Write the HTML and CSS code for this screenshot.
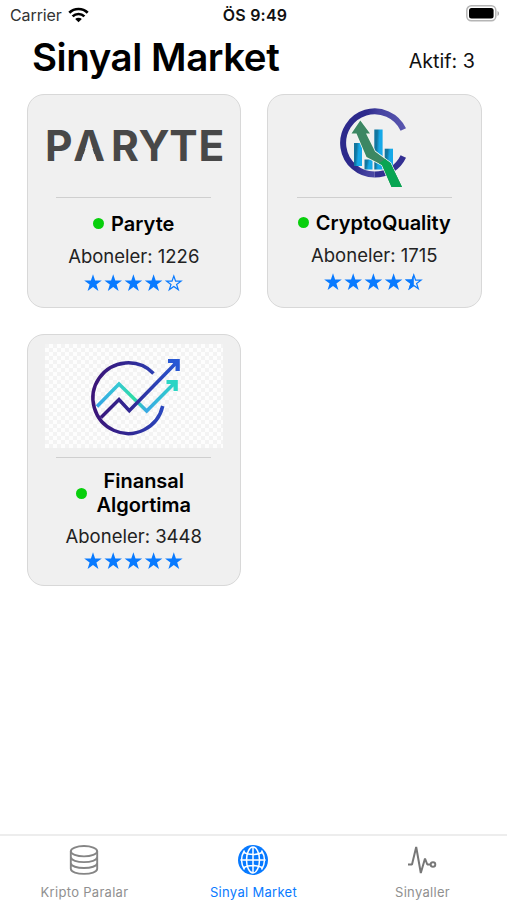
FILE: index.html
```html
<!DOCTYPE html>
<html lang="tr">
<head>
<meta charset="utf-8">
<title>Sinyal Market</title>
<link rel="stylesheet" href="styles.css">
</head>
<body>
<svg class="defs" aria-hidden="true">
  <defs>
    <path id="star" d="M9 .2 11.1 6.6 17.8 6.6 12.4 10.6 14.4 17 9 13.1 3.6 17 5.6 10.6 .2 6.6 6.9 6.6Z"/>
    <path id="star-line" d="M9 2 10.8 7.200 16.200 7.200 11.800 10.400 13.500 15.600 9 12.400 4.500 15.600 6.200 10.400 1.800 7.200 7.200 7.200Z"/>
  </defs>
</svg>
<div class="screen">
  <div class="status">
    <div class="carrier"><span>Carrier</span>
      <svg width="21" height="16" viewBox="0 0 21 16"><g fill="none" stroke="#000" stroke-width="2.7"><path d="M1.3 5.8a13 13 0 0 1 18.4 0"/><path d="M4.6 9.4a8.4 8.4 0 0 1 11.8 0"/></g><path d="M10.5 15.3 7.2 12a4.7 4.7 0 0 1 6.6 0Z"/></svg>
    </div>
    <div class="time">ÖS 9:49</div>
    <svg class="battery" width="34" height="17" viewBox="0 0 34 17"><rect x=".8" y=".8" width="29" height="15" rx="4.5" fill="#fff" stroke="#b5b5b5" stroke-width="1.5"/><rect x="3" y="3" width="24.6" height="10.6" rx="2.5"/><path d="M31.5 6v5c2-.8 2-4.200 0-5Z" fill="#aaa"/></svg>
  </div>
  <header class="header">
    <h1>Sinyal Market</h1>
    <span class="active-count">Aktif: 3</span>
  </header>
  <main class="grid">
    <article class="card">
      <div class="logo">
        <svg width="200" height="80" viewBox="34 107 200 80">
          <text class="wordmark" y="161" x="58.800 89 125 154 183.500 211.500">PARYTE</text>
          <path d="M89 138.500 97 162H81Z" fill="#f0f0f0"/>
        </svg>
      </div>
      <hr>
      <div class="name"><i class="dot"></i><h2>Paryte</h2></div>
      <p>Aboneler: 1226</p>
      <svg class="stars" width="100" height="18" viewBox="0 0 100 18"><use href="#star"/><use href="#star" x="20.2"/><use href="#star" x="40.4"/><use href="#star" x="60.600"/><use class="line" href="#star-line" x="80.800"/></svg>
    </article>
    <article class="card quality">
      <div class="logo">
        <svg width="180" height="80" viewBox="284 107 180 80">
          <defs>
            <linearGradient id="ring" x1="0" x2="1" y1=".4" y2=".6"><stop offset=".3" stop-color="#2d2a8c"/><stop offset=".5" stop-color="#4542a0"/><stop offset="1" stop-color="#5b58b0"/></linearGradient>
            <linearGradient id="bar" x2="1" y2=".25"><stop offset=".35" stop-color="#12769f"/><stop offset=".65" stop-color="#16a9e8"/></linearGradient>
          </defs>
          <path d="M403.300 129.500A31.600 31.600 0 1 0 374.500 174.600" fill="none" stroke="url(#ring)" stroke-width="6"/>
          <path d="M403.300 156.500A31.600 31.600 0 0 1 374.500 174.600" fill="none" stroke="#332f92" stroke-width="6"/>
          <g fill="url(#bar)"><rect x="354" y="143" width="8" height="23"/><rect x="364.500" y="159.500" width="8" height="10"/><rect x="374.300" y="129.500" width="8.300" height="40"/><rect x="384.700" y="148.700" width="8.300" height="18"/></g>
          <path d="M360.300 120.500 351.500 133.500H356.500L366.500 157 382 165 391.500 187H402L390.500 163 375 151.500 366 133.500H370Z" fill="#3c8763" stroke="#f3f8f3" stroke-width="1.600" paint-order="stroke"/>
          <path d="M382 165 391.500 187H402L390.500 163 385 159 379 163.500Z" fill="#08a552"/>
        </svg>
      </div>
      <hr>
      <div class="name"><i class="dot"></i><h2>CryptoQuality</h2></div>
      <p>Aboneler: 1715</p>
      <svg class="stars" width="100" height="18" viewBox="0 0 100 18"><use href="#star"/><use href="#star" x="20.2"/><use href="#star" x="40.4"/><use href="#star" x="60.600"/><use class="line" href="#star-line" x="80.800"/><path d="M89.800.2V13.100L84.400 17 86.400 10.600 81 6.600H87.700Z"/></svg>
    </article>
    <article class="card tall">
      <div class="logo">
        <svg width="178" height="104" viewBox="45 344 178 104">
          <defs>
            <pattern id="check" width="8" height="8" patternUnits="userSpaceOnUse" x="45" y="344"><rect width="8" height="8" fill="#fdfdfd"/><path d="M0 0h4v4H0zM4 4h4v4H4z" fill="#f3f3f3"/></pattern>
            <linearGradient id="deep" gradientUnits="userSpaceOnUse" x1="93" x2="179" y1="0" y2="0"><stop stop-color="#3b1478"/><stop offset=".45" stop-color="#302995"/><stop offset="1" stop-color="#2858d4"/></linearGradient>
            <linearGradient id="aqua" gradientUnits="userSpaceOnUse" x1="97" x2="178" y1="0" y2="0"><stop stop-color="#35a4e6"/><stop offset=".25" stop-color="#37c7d5"/><stop offset=".45" stop-color="#2edca4"/><stop offset=".61" stop-color="#39a9e5"/><stop offset="1" stop-color="#2bd5c4"/></linearGradient>
          </defs>
          <rect x="45" y="344" width="178" height="104" fill="url(#check)"/>
          <g fill="none" stroke-width="3.500">
            <g stroke="url(#aqua)"><path d="M97 406.500 119 384 146.700 411 174.500 383"/></g>
            <path d="M166.500 380H177.800V391H173.500V386.500L171 384H166.500Z" fill="#2bd5c4"/>
            <g stroke="url(#deep)"><path d="M153.500 373.500A35.300 35.300 0 1 0 162.700 406"/><path d="M101 417.500 119 399.500 129.300 410.700 176.500 362.500"/></g>
            <path d="M168 359H179.800V371H175.500V366L172.500 363H168Z" fill="#2858d4"/>
          </g>
        </svg>
      </div>
      <hr>
      <div class="name"><i class="dot"></i><h2>Finansal<br>Algortima</h2></div>
      <p>Aboneler: 3448</p>
      <svg class="stars" width="100" height="18" viewBox="0 0 100 18"><use href="#star"/><use href="#star" x="20.2"/><use href="#star" x="40.4"/><use href="#star" x="60.600"/><use href="#star" x="80.800"/></svg>
    </article>
  </main>
  <nav class="tabs">
    <div class="tab">
      <svg width="34" height="34" viewBox="0 0 34 34" fill="none" stroke="#858585" stroke-width="1.900"><ellipse cx="17" cy="8.200" rx="13.200" ry="5.200"/><path d="M3.800 8.200V25.800C3.800 32.500 30.200 32.500 30.200 25.800V8.200M3.800 14.100C3.800 20.800 30.200 20.800 30.200 14.100M3.800 20C3.800 26.700 30.200 26.700 30.200 20"/></svg>
      <span>Kripto Paralar</span>
    </div>
    <div class="tab selected">
      <svg width="34" height="34" viewBox="0 0 34 34"><circle cx="17" cy="17" r="15" fill="#087aff"/><g fill="none" stroke="#fff" stroke-width="1.500"><path d="M17 4V30M4.500 17H29.500M7 9.200Q17 14 27 9.200M7 24.800Q17 20 27 24.800"/><ellipse cx="17" cy="17" rx="6.500" ry="13"/><path d="M8.500 7.500Q2.500 17 8.500 26.500M25.500 7.500Q31.500 17 25.500 26.500"/></g></svg>
      <span>Sinyal Market</span>
    </div>
    <div class="tab">
      <svg width="34" height="34" viewBox="0 0 34 34" fill="none" stroke="#777" stroke-width="2"><path d="M3 21.500H7L11.200 4 15.800 30 20 15.500 22.300 21.500H25.500" stroke-linejoin="bevel"/><circle cx="28" cy="21.500" r="2.300" stroke-width="1.900"/></svg>
      <span>Sinyaller</span>
    </div>
  </nav>
</div>
</body>
</html>
```
FILE: styles.css
```css
* { box-sizing: border-box; }
body {
  margin: 0;
  background: #fff;
  color: #000;
  font-family: Inter, "Liberation Sans", sans-serif;
}
svg { display: block; }
.defs { position: absolute; width: 0; height: 0; }
.screen {
  width: 507px;
  height: 900px;
  display: flex;
  flex-direction: column;
  overflow: hidden;
}
.status {
  height: 29px;
  padding: 0 7px 0 10px;
  display: grid;
  grid-template-columns: 1fr auto 1fr;
  align-items: center;
  font-size: 16px;
}
.carrier { display: flex; align-items: center; gap: 6px; color: #333; }
.carrier span { letter-spacing: -0.1px; }
.time { font-weight: 600; color: #111; letter-spacing: 0.2px; }
.battery { justify-self: end; margin-top: -2px; }
.header {
  height: 64.5px;
  padding: 0 32px 0 32px;
  display: flex;
  justify-content: space-between;
}
h1 {
  margin: 4px 0 0;
  font-size: 38.5px;
  line-height: 48px;
  font-weight: 600;
  letter-spacing: -0.45px;
}
.active-count { margin-top: 20px; font-size: 19.7px; line-height: 24px; color: #111; }
.grid {
  flex: 1;
  padding: 0 25px 0 26.5px;
  display: grid;
  grid-template-columns: 214.5px 215.5px;
  grid-template-rows: 214px 252.5px;
  gap: 26px 25.5px;
  align-content: start;
}
.card {
  padding-top: 12px;
  border: 1.5px solid #d8d8d8;
  border-radius: 17px;
  background: #f0f0f0;
  display: flex;
  flex-direction: column;
  align-items: center;
}
.tall { padding-top: 9px; }
.logo { display: flex; }
.wordmark {
  font: 700 42.5px Inter, sans-serif;
  font-kerning: none;
  font-feature-settings: "kern" 0, "calt" 0;
  fill: #484848;
  text-anchor: middle;
}
hr { width: 155px; height: 1px; margin: 10px 0 0; border: 0; background: #cfcfcf; }
.name {
  height: 24px;
  margin-top: 14px;
  display: flex;
  align-items: center;
  gap: 7px;
}
.quality .name { margin-top: 13px; }
.tall hr { margin-top: 9px; }
.tall .name { height: 48px; margin-top: 11.5px; gap: 9px; }
h2 { margin: 0; font-size: 20px; line-height: 24px; font-weight: 600; text-align: center; }
.dot { width: 11px; height: 11px; border-radius: 50%; background: #08cf0c; }
p { margin: 8px 0 0; font-size: 18.5px; line-height: 24px; color: #222; }
.tall p { margin-top: 6.5px; }
.stars { margin-top: 6.5px; fill: #087aff; }
.tall .stars { margin-top: 4.5px; }
.line { fill: none; stroke: #087aff; stroke-width: 1.2px; }
.tabs {
  height: 66.5px;
  border-top: 2px solid #ededed;
  display: grid;
  grid-template-columns: repeat(3, 1fr);
}
.tab {
  padding-top: 7px;
  display: flex;
  flex-direction: column;
  align-items: center;
  font-size: 13px;
  line-height: 16px;
  letter-spacing: 0.3px;
  color: #909090;
}
.tab svg { margin-left: -1.5px; }
.tab span { margin-top: 7px; }
.selected { color: #087aff; }
```
